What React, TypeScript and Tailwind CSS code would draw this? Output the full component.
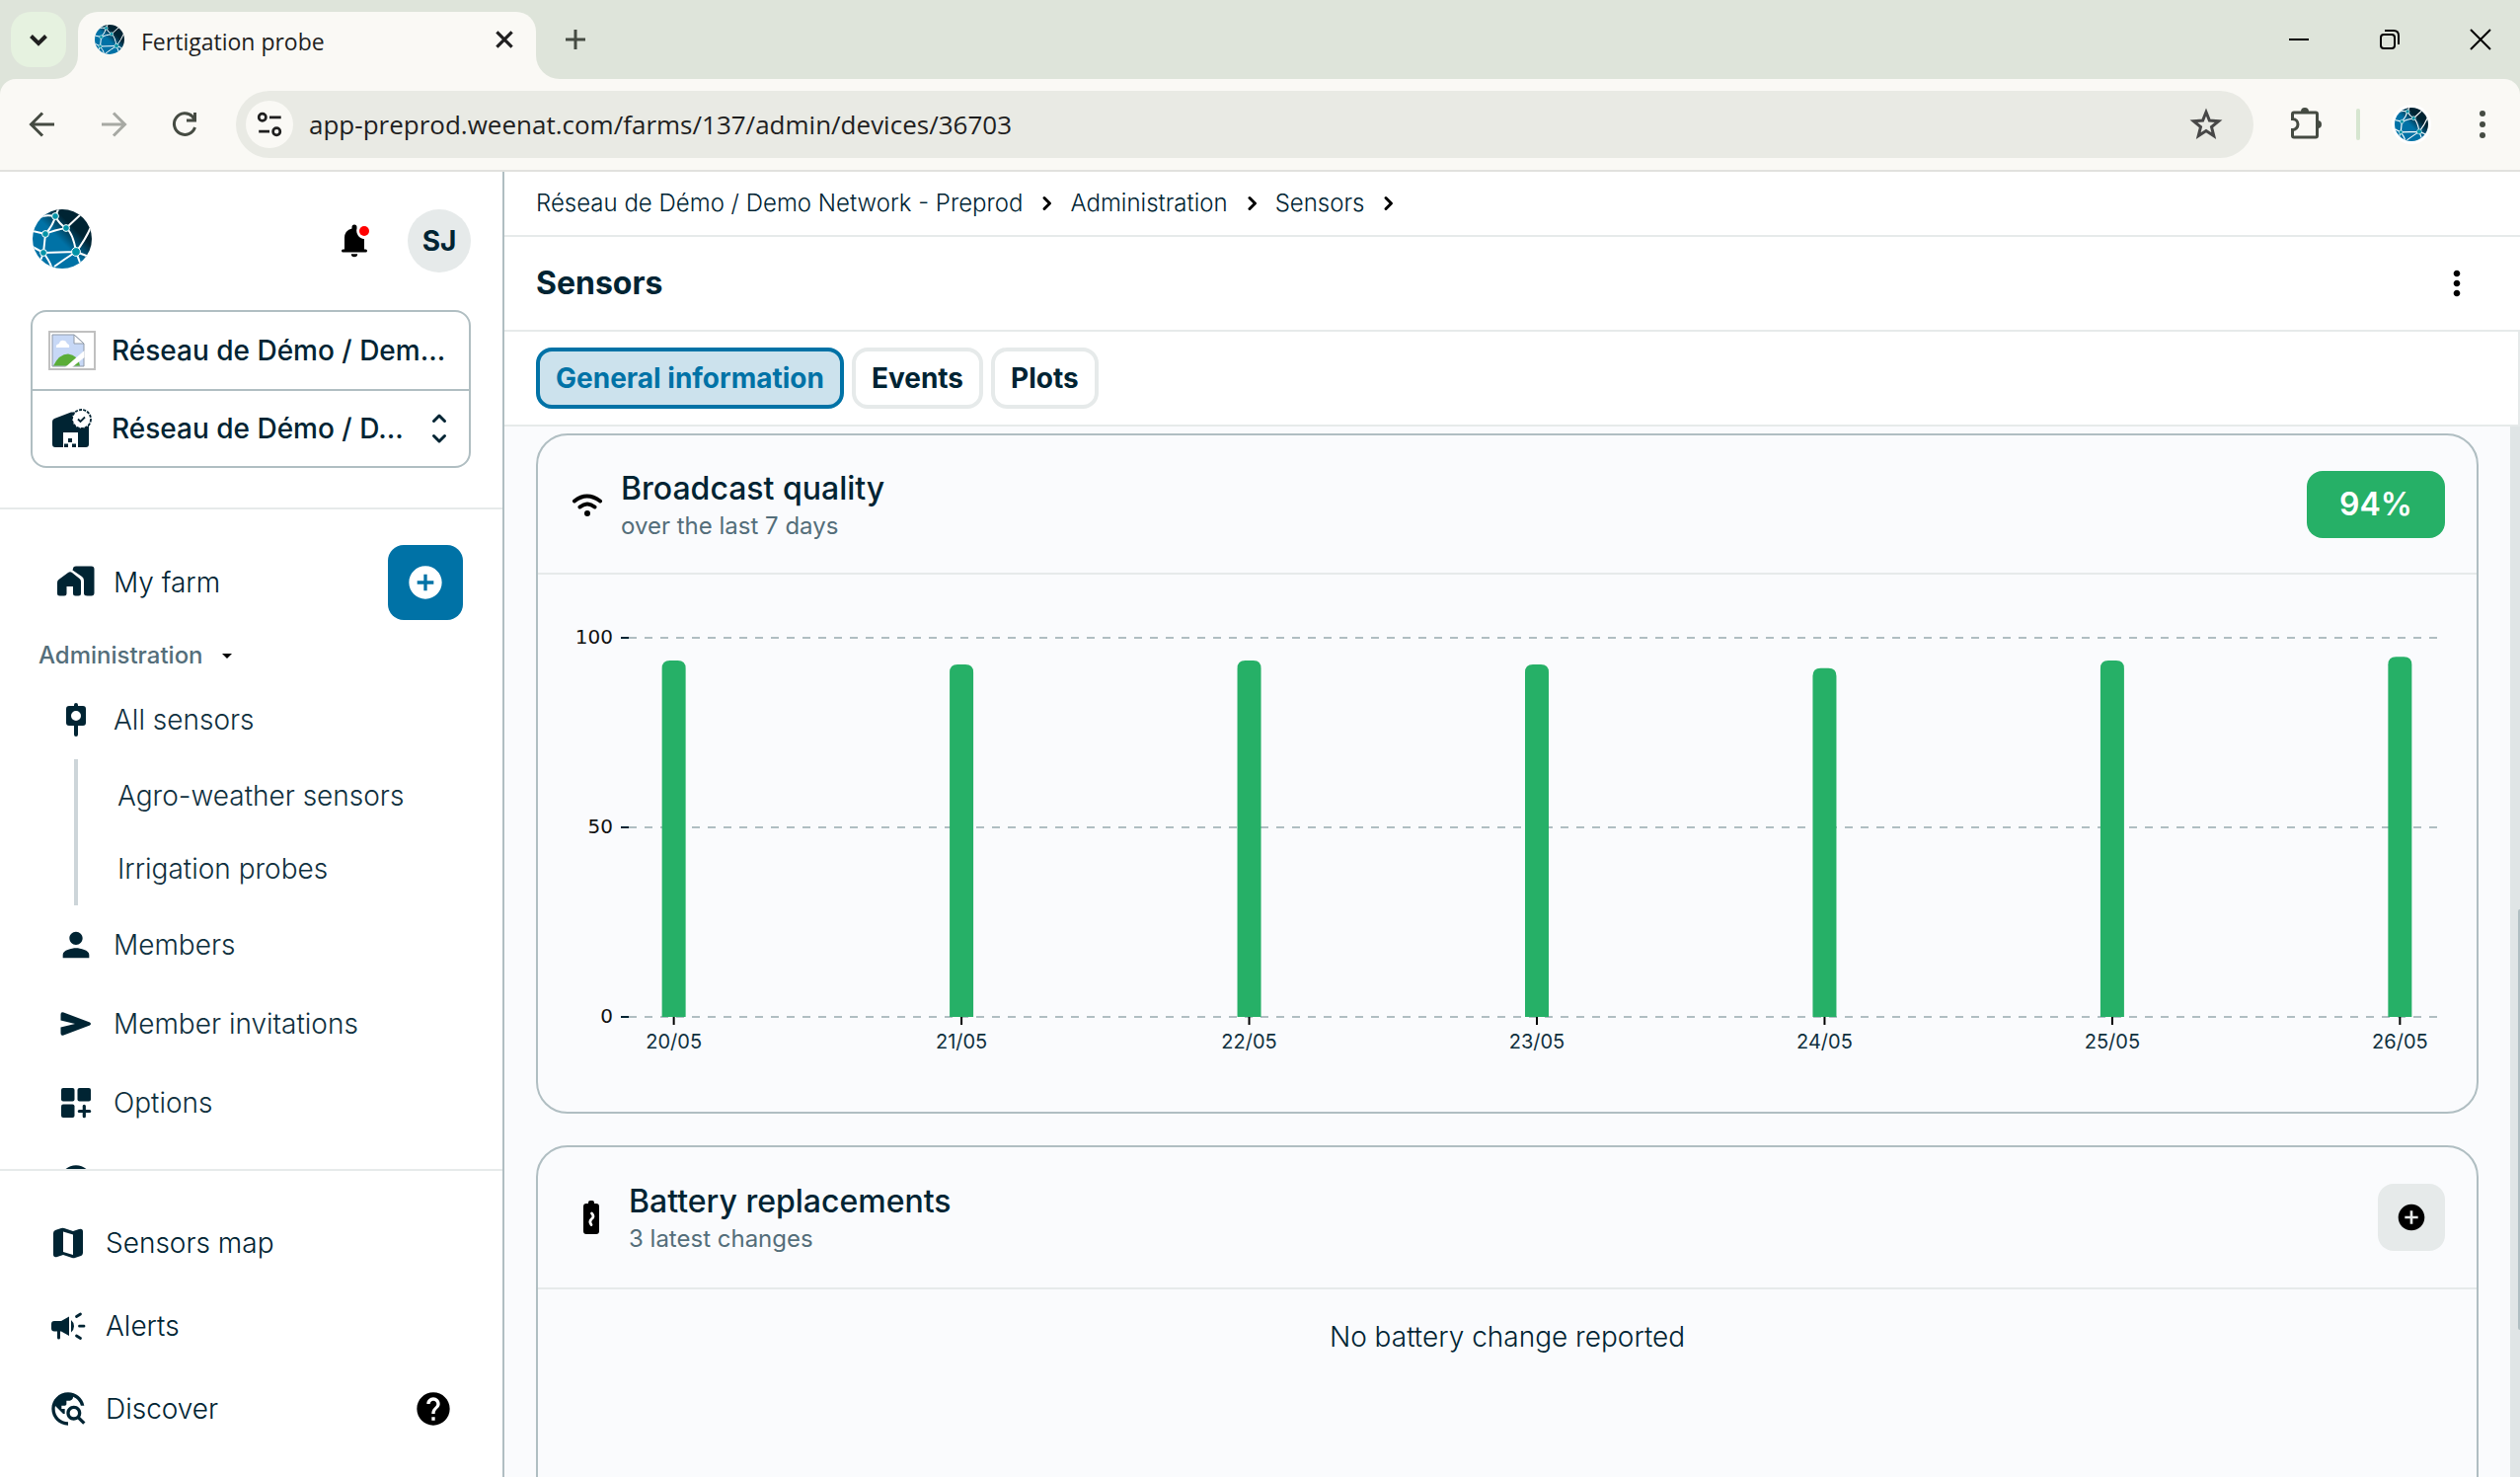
import { ReactNode } from "react";
import {
  MdAddCircle,
  MdArrowDropDown,
  MdHelp,
  MdMoreVert,
  MdPerson,
  MdTravelExplore,
} from "react-icons/md";

const quality = [
  { day: "20/05", value: 94 },
  { day: "21/05", value: 93 },
  { day: "22/05", value: 94 },
  { day: "23/05", value: 93 },
  { day: "24/05", value: 92 },
  { day: "25/05", value: 94 },
  { day: "26/05", value: 95 },
];

function Logo({ id, className }: { id: string; className: string }) {
  return (
    <svg viewBox="0 0 60 60" className={className} aria-hidden="true">
      <defs>
        <linearGradient id={`${id}-fill`} x1="0.2" y1="0.75" x2="0.75" y2="0.2">
          <stop offset="0.45" stopColor="#0072a6" />
          <stop offset="0.85" stopColor="#002433" />
        </linearGradient>
        <clipPath id={`${id}-clip`}>
          <circle cx="30" cy="30" r="30" />
        </clipPath>
      </defs>
      <g clipPath={`url(#${id}-clip)`}>
        <rect width="60" height="60" fill={`url(#${id}-fill)`} />
        <path
          d="M23 7 26 0M23 7Q13 5 8 8M23 7Q21 16 13 25M23 7Q27 15 34 19M34 19 49 5M34 19Q22 21 13 25M34 19Q41 24 44 43M13 25 0 22M13 25 11 44M11 44 0 38M11 44 44 43M11 44 8 52M11 44Q17 52 19 58M44 43Q53 32 60 16M44 43 57 48M44 43 48 54M44 43Q33 50 22 58"
          fill="none"
          stroke="#fff"
          strokeWidth="2"
        />
        <g fill="#0093a7" stroke="#fff" strokeWidth="1">
          <circle cx="23" cy="7" r="3.4" />
          <circle cx="34" cy="19" r="3.4" />
          <circle cx="13" cy="25" r="3.4" />
          <circle cx="11" cy="44" r="3.4" />
          <circle cx="44" cy="43" r="4.4" />
        </g>
      </g>
    </svg>
  );
}

function Glyph({ children, className = "size-10" }: { children: ReactNode; className?: string }) {
  return (
    <svg viewBox="0 0 40 40" fill="currentColor" className={`shrink-0 ${className}`} aria-hidden="true">
      {children}
    </svg>
  );
}

function Stroke({ children, className = "size-10", width = 3 }: { children: ReactNode; className?: string; width?: number }) {
  return (
    <svg
      viewBox="0 0 40 40"
      fill="none"
      stroke="currentColor"
      strokeWidth={width}
      className={`shrink-0 ${className}`}
      aria-hidden="true"
    >
      {children}
    </svg>
  );
}

function BrowserChrome() {
  return (
    <header className="shrink-0 bg-[#dee4da] font-['Open_Sans','Noto_Sans',sans-serif] text-[#1f1f1f]">
      <div className="flex h-20 items-end">
        <button aria-label="Search tabs" className="mb-3 ml-[11px] flex size-14 items-center justify-center rounded-[20px] bg-[#e6f2e0]">
          <Stroke width={4}>
            <path d="m12.500 16.500 7.500 7.500 7.500-7.500" />
          </Stroke>
        </button>
        <div className="relative ml-3 flex h-[68px] w-[464px] items-center rounded-t-[20px] bg-[#faf9f5] pr-4 pl-[17px]">
          <svg viewBox="0 0 24 24" className="absolute bottom-0 -left-6 size-6 text-[#faf9f5]" fill="currentColor" aria-hidden="true">
            <path d="M24 0v24H0A24 24 0 0 0 24 0Z" />
          </svg>
          <svg viewBox="0 0 24 24" className="absolute -right-6 bottom-0 size-6 text-[#faf9f5]" fill="currentColor" aria-hidden="true">
            <path d="M0 0v24h24A24 24 0 0 1 0 0Z" />
          </svg>
          <Logo id="tab" className="mb-3 size-[30px]" />
          <span className="ml-[17px] flex-1 pb-2 text-[23px]">Fertigation probe</span>
          <button aria-label="Close tab" className="pb-3">
            <Stroke className="size-8">
              <path d="m10.500 10.500 19 19m0-19-19 19" strokeWidth="4" />
            </Stroke>
          </button>
        </div>
        <button aria-label="New tab" className="mb-5 ml-5 text-[#454b42]">
          <Stroke>
            <path d="M20 10v20M10 20h20" />
          </Stroke>
        </button>
        <div className="mb-5 ml-auto flex gap-[52px] pr-5 text-black">
          <button aria-label="Minimize">
            <Stroke width={2}>
              <path d="M10 20h20" />
            </Stroke>
          </button>
          <button aria-label="Restore">
            <Stroke width={2}>
              <rect x="11" y="15" width="14" height="14" rx="3" />
              <path d="M15 11h9q5 0 5 5v9" />
            </Stroke>
          </button>
          <button aria-label="Close">
            <Stroke width={2}>
              <path d="m10 10 20 20m0-20L10 30" />
            </Stroke>
          </button>
        </div>
      </div>

      <div className="flex h-[94px] items-center rounded-t-2xl border-b-2 border-[#e1e1de] bg-[#faf9f5] pr-[18px] pl-[23px] text-[#454b42]">
        <button aria-label="Back">
          <Stroke>
            <path d="M32 20H9.500M20 8.500 8.500 20 20 31.500" />
          </Stroke>
        </button>
        <button aria-label="Forward" className="ml-8 text-[#a7a9a3]" disabled>
          <Stroke>
            <path d="M8 20h22.500M20 8.500 31.500 20 20 31.500" />
          </Stroke>
        </button>
        <button aria-label="Reload" className="ml-8">
          <Stroke>
            <path d="M30.500 23A10.800 10.800 0 1 1 28 12l3 4M22 16h8.500V8" />
          </Stroke>
        </button>
        <div className="ml-8 flex h-[68px] flex-1 items-center rounded-full bg-[#e9eae4] pr-7 pl-[10px] text-[#1f1f1f]">
          <button aria-label="Site information" className="flex size-12 items-center justify-center rounded-full bg-[#faf9f5]">
            <Stroke className="size-9">
              <circle cx="12" cy="12" r="4" />
              <path d="M20 12h13M8 28h12" />
              <circle cx="28" cy="28" r="4" />
            </Stroke>
          </button>
          <input
            aria-label="Address"
            className="ml-4 flex-1 bg-transparent text-[26px] outline-none"
            defaultValue="app-preprod.weenat.com/farms/137/admin/devices/36703"
          />
          <button aria-label="Bookmark" className="text-[#474747]">
            <Stroke>
              <path d="m20 7.500 3.400 8.600 9.200.6-7.100 5.900 2.300 9L20 26.600l-7.800 5 2.300-9-7.100-5.900 9.200-.6Z" />
            </Stroke>
          </button>
        </div>
        <button aria-label="Extensions" className="ml-8">
          <Stroke>
            <path d="M7.500 14.500v-5q0-1.500 1.500-1.500h22q1.500 0 1.500 1.500v22q0 1.500-1.500 1.500H9q-1.500 0-1.500-1.500v-6a5.500 5.500 0 0 0 0-11Z" />
            <path d="M16 7a4 4 0 0 1 8 0ZM33 16a4 4 0 0 1 0 8Z" fill="currentColor" stroke="none" />
          </Stroke>
        </button>
        <div className="ml-8 h-8 w-1 rounded-full bg-[#d6e6d0]" />
        <button aria-label="Profile" className="ml-8 flex size-10 items-center justify-center rounded-full bg-white">
          <Logo id="profile" className="size-[34px]" />
        </button>
        <button aria-label="Browser menu" className="ml-8">
          <Glyph>
            <circle cx="20" cy="9" r="3" />
            <circle cx="20" cy="20" r="3" />
            <circle cx="20" cy="31" r="3" />
          </Glyph>
        </button>
      </div>
    </header>
  );
}

function NavLink({ icon, label }: { icon: ReactNode; label: string }) {
  return (
    <a href="#" className="flex h-20 items-center gap-[18px] pl-[57px] text-[#0f303e]">
      <span className="text-[#002433]">{icon}</span>
      {label}
    </a>
  );
}

function FooterLink({ icon, label, children }: { icon: ReactNode; label: string; children?: ReactNode }) {
  return (
    <div className="flex h-[84px] items-center pr-[50px] pl-[49px]">
      <a href="#" className="flex flex-1 items-center gap-[18px]">
        {icon}
        {label}
      </a>
      {children}
    </div>
  );
}

function NetworkPicker() {
  return (
    <div className="mt-[38px] mr-8 ml-[31px] rounded-2xl border-2 border-[#b0bec2] font-medium">
      <div className="flex h-20 items-center border-b-2 border-[#b0bec2] px-4">
        <svg viewBox="0 0 48 40" className="h-10 w-12 shrink-0" role="img" aria-label="Network">
          <rect x="1" y="1" width="46" height="38" fill="#fff" stroke="#c0c0c0" strokeWidth="2" />
          <path d="M4 4h22l10 9v23H4Z" fill="#c7d8f6" stroke="#909aa8" />
          <path d="M26 4v9h10Z" fill="#fff" stroke="#909aa8" />
          <path d="M8 17q-1-3 3-4 1-4 5-3 2 0 3 3 3 1 2 4Z" fill="#fff" />
          <path d="M5 35.500q6-12 15-12 10 1 12 12Z" fill="#5aad38" />
          <path d="M17 37 36.500 20v7L24 37Z" fill="#fff" />
        </svg>
        <span className="ml-4 whitespace-nowrap">Réseau de Démo / Dem…</span>
      </div>
      <button className="flex h-[76px] w-full items-center px-4 text-left">
        <svg viewBox="0 0 48 44" className="h-11 w-12 shrink-0" fill="currentColor" aria-hidden="true">
          <path d="M4 15q0-2 2-3l17-6.500h4l14 9V38q0 3-3 3h-8V26H15v15H7q-3 0-3-3Z" />
          <path d="M20 32h4v4h-4ZM16 37.500h4V41h-4ZM24 37.500h4V41h-4Z" />
          <circle cx="33.500" cy="12.500" r="9.500" fill="#fff" stroke="currentColor" strokeWidth="1.800" strokeDasharray="3 1.200" />
          <path d="m30 12.500 2.500 2.500 4.500-4.500" fill="none" stroke="currentColor" strokeWidth="1.800" />
        </svg>
        <span className="ml-4 flex-1 whitespace-nowrap">Réseau de Démo / D…</span>
        <svg viewBox="0 0 28 40" className="h-10 w-7 shrink-0" fill="none" stroke="currentColor" strokeWidth="3" strokeLinecap="round" strokeLinejoin="round" aria-hidden="true">
          <path d="m8.500 12.500 5.500-5.500 5.500 5.500M8.500 27.500 14 33l5.500-5.500" />
        </svg>
      </button>
    </div>
  );
}

function Sidebar() {
  return (
    <aside className="flex w-[511px] shrink-0 flex-col border-r-2 border-[#b0bec2] bg-white text-[28px] leading-9">
      <div className="shrink-0 border-b-2 border-[#e6eaea] pt-[38px] pb-10">
        <div className="flex items-center pr-8 pl-[33px]">
          <Logo id="brand" className="size-[60px] self-start" />
          <button aria-label="Notifications" className="ml-auto text-black">
            <Glyph>
              <path d="M7 30q0-1.500 1.500-1.500H10V17q0-7.500 7.500-9.500V6q0-2.500 2.500-2.500T22.500 6v1.500a8.500 8.500 0 0 0 7.500 10.700v10.300h1.500q1.500 0 1.500 1.500t-1.500 1.500h-23Q7 31.500 7 30ZM16.800 33.200h6.400a3.200 3 0 0 1-6.400 0Z" />
              <circle cx="30" cy="10" r="5" fill="#ff0000" />
            </Glyph>
          </button>
          <button aria-label="Account" className="ml-[34px] size-16 rounded-full bg-[#e6eaea] font-bold">
            SJ
          </button>
        </div>
        <NetworkPicker />
      </div>

      <nav className="min-h-0 flex-1 overflow-hidden pt-9 font-light">
        <div className="flex h-[76px] items-center justify-between pr-10 pl-[57px]">
          <a href="#" className="flex items-center gap-[18px]">
            <Glyph>
              <path d="M1 20q0-2 1.500-3l9.500-7q2-1.500 4 0l7.500 6q1.500 1.200 1.500 3v12q0 2.500-2.500 2.500h-3Q17 33.500 17 31v-7h-6.500v7q0 2.500-2.500 2.500H3.500Q1 33.500 1 31Z" />
              <path d="M17 6q0-2.500 3-2.500h15.500Q38.500 3.500 38.500 6.500v24q0 3-3 3h-4Q28 33.500 28 31V18q0-2.500-2-4L16.500 7.500Z" />
            </Glyph>
            My farm
          </a>
          <button aria-label="Add" className="flex size-[76px] items-center justify-center rounded-2xl bg-[#0072a6] text-white">
            <MdAddCircle className="size-10" />
          </button>
        </div>
        <button className="mt-[18px] flex items-center pl-[39px] text-2xl leading-9 font-medium text-[#546e7a]">
          Administration
          <MdArrowDropDown className="ml-3 size-6 text-black" />
        </button>
        <div className="mt-[7px]">
          <NavLink
            label="All sensors"
            icon={
              <Glyph>
                <path fillRule="evenodd" d="M18 5q0-2 2-2t2 2v1h5q3 0 3 3v14q0 3-3 3h-5v9q0 2-2 2t-2-2v-9h-5q-3 0-3-3V9q0-3 3-3h5Zm2 6a5 5 0 1 0 0 10 5 5 0 0 0 0-10Z" />
              </Glyph>
            }
          />
          <div className="ml-[75px] flex flex-col border-l-4 border-[#cdd5d9] pl-10 text-[#0f303e]">
            <a href="#" className="flex h-[74px] items-center">
              Agro-weather sensors
            </a>
            <a href="#" className="flex h-[74px] items-center">
              Irrigation probes
            </a>
          </div>
          <NavLink label="Members" icon={<MdPerson className="size-10" />} />
          <NavLink
            label="Member invitations"
            icon={
              <Glyph>
                <path d="M4.500 10.500q0-3 3-2L34 18.500q2 1.500 0 3L7.500 31.500q-3 1-3-2V23.500L19 20 4.500 16.500Z" />
              </Glyph>
            }
          />
          <NavLink
            label="Options"
            icon={
              <Glyph>
                <rect x="5" y="5" width="13.500" height="13.500" rx="2" />
                <rect x="21.500" y="5" width="13.500" height="13.500" rx="2" />
                <rect x="5" y="21.500" width="13.500" height="13.500" rx="2" />
                <path d="M28.300 23.300v10.400M23.300 28.500h10.400" fill="none" stroke="currentColor" strokeWidth="3.200" strokeLinecap="round" />
              </Glyph>
            }
          />
          <NavLink label="" icon={<MdHelp className="size-10" />} />
        </div>
      </nav>

      <div className="shrink-0 border-t-2 border-[#e6eaea] pt-[31px] pb-[27px] font-light">
        <FooterLink
          label="Sensors map"
          icon={
            <Glyph>
              <path fillRule="evenodd" d="M5 10q0-2 2-3l6-2q1.500-.5 3 0l9 3 6-2q4-1 4 2.500V30q0 2-2 3l-6 2q-1.500.5-3 0l-9-3-6 2q-4 1-4-2.500ZM15 8.500v20.500l10 3V11.500Z" />
            </Glyph>
          }
        />
        <FooterLink
          label="Alerts"
          icon={
            <Glyph>
              <path d="M3 18q0-3 3-3h7l8-4.500V30l-8-4.500h-1V32q0 1.500-1.500 1.500T9 32v-6.500H6q-3 0-3-3ZM23 14q3 2.500 3 6.200T23 26.500Z" />
              <path d="m28.500 10.500 4-2.500M31.500 20.200H36M28.500 30l4 2.500" fill="none" stroke="currentColor" strokeWidth="2.800" strokeLinecap="round" />
            </Glyph>
          }
        />
        <FooterLink label="Discover" icon={<MdTravelExplore className="size-10" />}>
          <button aria-label="Help" className="text-black">
            <MdHelp className="size-10" />
          </button>
        </FooterLink>
      </div>
    </aside>
  );
}

function Crumb({ label }: { label: string }) {
  return (
    <>
      <a href="#">{label}</a>
      <svg viewBox="0 0 24 24" className="mx-3 size-6" fill="none" stroke="#000" strokeWidth="3" strokeLinecap="round" strokeLinejoin="round" aria-hidden="true">
        <path d="m10 6.500 5.500 5.500-5.500 5.500" />
      </svg>
    </>
  );
}

function Tab({ label, active }: { label: string; active?: boolean }) {
  return (
    <button
      className={`h-[62px] rounded-2xl border-4 px-4 text-[28px] font-bold ${
        active ? "border-[#0072a6] bg-[#cce2ed] text-[#0072a6]" : "border-[#e6eaea] bg-white"
      }`}
    >
      {label}
    </button>
  );
}

function Card({
  icon,
  title,
  subtitle,
  action,
  className = "",
  headerClassName,
  children,
}: {
  icon: ReactNode;
  title: string;
  subtitle: string;
  action: ReactNode;
  className?: string;
  headerClassName: string;
  children: ReactNode;
}) {
  return (
    <section className={`shrink-0 rounded-[32px] border-2 border-[#b0bec2] ${className}`}>
      <div className={`flex items-center border-b-2 border-[#e6eaea] px-8 ${headerClassName}`}>
        {icon}
        <div className="pt-1">
          <h2 className="text-[32px] leading-10 font-medium">{title}</h2>
          <p className="text-2xl leading-9 text-[#546e7a]">{subtitle}</p>
        </div>
        <div className="ml-auto">{action}</div>
      </div>
      {children}
    </section>
  );
}

const BASELINE = 448;
const yFor = (value: number) => BASELINE - value * 3.84;
const xFor = (index: number) => `${2.48 + index * 15.84}%`;

function QualityChart() {
  return (
    <div className="flex pr-8">
      <svg className="h-[544px] w-[92px] shrink-0" fontSize="20" fill="#111">
        {[100, 50, 0].map((tick) => (
          <g key={tick}>
            <text x="76" y={yFor(tick) + 6} textAnchor="end" className="font-['DejaVu_Sans',sans-serif]">
              {tick}
            </text>
            <path d={`M84 ${yFor(tick)}h8`} stroke="#002433" strokeWidth="2" />
          </g>
        ))}
      </svg>
      <svg className="h-[544px] min-w-0 flex-1" fontSize="20">
        {[100, 50, 0].map((tick) => (
          <line key={tick} x1="0" x2="100%" y1={yFor(tick)} y2={yFor(tick)} stroke="#b0bec2" strokeWidth="2" strokeDasharray="8 8" />
        ))}
        {quality.map(({ day, value }, index) => (
          <svg key={day} x={xFor(index)} overflow="visible">
            <path d={`M-12 ${BASELINE}V${yFor(value) + 8}q0-8 8-8H4q8 0 8 8V${BASELINE}Z`} fill="#26b067" />
            <path d={`M0 ${BASELINE}v8`} stroke="#000" strokeWidth="2" />
            <text x="0" y={BASELINE + 32} textAnchor="middle" fill="#0f303e" className="font-['Inter',sans-serif]">
              {day}
            </text>
          </svg>
        ))}
      </svg>
    </div>
  );
}

function DevicePage() {
  return (
    <main className="flex min-w-0 flex-1 flex-col bg-white">
      <nav aria-label="Breadcrumb" className="flex h-[66px] shrink-0 items-center border-b-2 border-[#e6eaea] pl-8 text-2xl font-light">
        <Crumb label="Réseau de Démo / Demo Network - Preprod" />
        <Crumb label="Administration" />
        <Crumb label="Sensors" />
      </nav>
      <div className="flex h-24 shrink-0 items-center justify-between border-b-2 border-[#e6eaea] pr-11 pl-8">
        <h1 className="text-[32px] font-bold">Sensors</h1>
        <button aria-label="More actions" className="text-black">
          <MdMoreVert className="size-10" />
        </button>
      </div>
      <div className="flex h-24 shrink-0 items-center gap-2 border-r-2 border-b-2 border-[#e6eaea] pl-8">
        <Tab label="General information" active />
        <Tab label="Events" />
        <Tab label="Plots" />
      </div>

      <div className="flex min-h-0 flex-1 bg-[#fafbfd]">
        <div className="flex min-w-0 flex-1 flex-col gap-8 overflow-hidden px-8 pt-[7px]">
          <Card
            title="Broadcast quality"
            subtitle="over the last 7 days"
            headerClassName="h-[141px]"
            icon={
              <Stroke className="-ml-0.5 mr-3.5 size-10 text-black" width={4}>
                <path d="M7 16.500Q19.500 6.500 33 16.500M12.500 22.500q7.500-6 15 0" strokeLinecap="round" />
                <circle cx="20" cy="29" r="3" fill="currentColor" stroke="none" />
              </Stroke>
            }
            action={
              <div className="flex h-[68px] items-center rounded-2xl bg-[#26b067] px-[33px] text-[32px] font-semibold text-white">94%</div>
            }
          >
            <QualityChart />
          </Card>

          <Card
            title="Battery replacements"
            subtitle="3 latest changes"
            className="h-[600px]"
            headerClassName="h-36"
            icon={
              <Glyph className="mr-[18px] ml-0.5 size-10 text-black">
                <path d="M12 9q0-3 3-3h2V5q0-2 2-2h2q2 0 2 2v1h2q3 0 3 3v25q0 3-3 3H15q-3 0-3-3Z" />
                <path d="M20.500 16q3 3 0 5.500t-.5 6" fill="none" stroke="#fff" strokeWidth="2.800" strokeLinecap="round" />
              </Glyph>
            }
            action={
              <button aria-label="Add a battery change" className="flex size-[68px] items-center justify-center rounded-2xl bg-[#e6eaea] text-black">
                <MdAddCircle className="size-8" />
              </button>
            }
          >
            <p className="pt-7 text-center text-[28px] leading-10 font-light">No battery change reported</p>
          </Card>
        </div>
        <div className="flex w-[10px] shrink-0 flex-col items-end bg-[#e0e5e6]">
          <div className="h-[46%]" />
          <div className="h-[40%] w-[2px] rounded-l-sm bg-[#b0bec2]" />
        </div>
      </div>
    </main>
  );
}

export default function App() {
  return (
    <div className="flex h-screen flex-col overflow-hidden bg-white">
      <BrowserChrome />
      <div className="flex min-h-0 flex-1 font-['Inter',sans-serif] text-[#002433]">
        <Sidebar />
        <DevicePage />
      </div>
    </div>
  );
}
